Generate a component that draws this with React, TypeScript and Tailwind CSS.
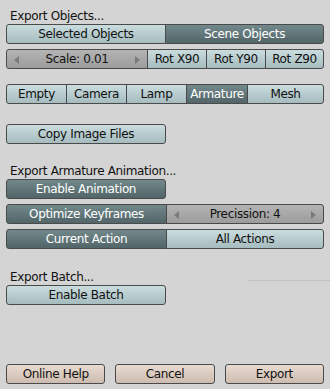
import React from "react";

type Kind = "light" | "dark" | "num" | "tan";

const kindClass: Record<Kind, string> = {
  light: "bg-gradient-to-b from-[#cadcde] to-[#a6bcbf] text-[#111]",
  dark: "bg-gradient-to-b from-[#72898c] to-[#526568] text-white",
  num: "bg-gradient-to-b from-[#b4b4b4] to-[#9c9c9c] text-[#111]",
  tan: "bg-gradient-to-b from-[#e8dbd1] to-[#cdbbaf] text-[#111]",
};

function Btn({
  label,
  kind = "light",
  className = "",
}: {
  label: string;
  kind?: Kind;
  className?: string;
}) {
  return (
    <div
      className={`flex h-[20px] items-center justify-center border border-[#4a4a4a] ${kindClass[kind]} ${className}`}
    >
      {label}
    </div>
  );
}

function NumField({ label, className = "" }: { label: string; className?: string }) {
  return (
    <div
      className={`relative flex h-[20px] items-center justify-center border border-[#4a4a4a] ${kindClass.num} ${className}`}
    >
      <svg className="absolute left-[7px] top-[6px]" width="5" height="8" viewBox="0 0 5 8">
        <polygon points="5,0 5,8 0,4" fill="#7a7a7a" />
      </svg>
      {label}
      <svg className="absolute right-[7px] top-[6px]" width="5" height="8" viewBox="0 0 5 8">
        <polygon points="0,0 0,8 5,4" fill="#7a7a7a" />
      </svg>
    </div>
  );
}

function Label({ text }: { text: string }) {
  return <div className="h-[14px] pl-[4px] leading-[14px] text-[#111]">{text}</div>;
}

export default function App() {
  return (
    <div
      className="h-[389px] w-[330px] overflow-hidden bg-[#d4d4d4] px-[6px] pt-[9px] text-[12px] tracking-[-0.35px]"
      style={{ fontFamily: '"DejaVu Sans", sans-serif' }}
    >
      {/* Export objects */}
      <Label text="Export Objects..." />
      <div className="mt-[1px] flex">
        <Btn label="Selected Objects" className="w-[160px] rounded-l-[3px]" />
        <Btn label="Scene Objects" kind="dark" className="-ml-px flex-1 rounded-r-[3px]" />
      </div>
      <div className="mt-[5px] flex">
        <NumField label="Scale: 0.01" className="w-[142px] rounded-l-[3px]" />
        <Btn label="Rot X90" className="-ml-px w-[60px]" />
        <Btn label="Rot Y90" className="-ml-px w-[60px]" />
        <Btn label="Rot Z90" className="-ml-px flex-1 rounded-r-[3px]" />
      </div>

      {/* Object types */}
      <div className="mt-[15px] flex">
        <Btn label="Empty" className="w-[61px] rounded-l-[3px]" />
        <Btn label="Camera" className="-ml-px w-[61px]" />
        <Btn label="Lamp" className="-ml-px w-[61px]" />
        <Btn label="Armature" kind="dark" className="-ml-px w-[62px]" />
        <Btn label="Mesh" className="-ml-px flex-1 rounded-r-[3px]" />
      </div>

      <Btn label="Copy Image Files" className="mt-[20px] w-[160px] rounded-[3px]" />

      {/* Armature animation */}
      <div className="mt-[20px]">
        <Label text="Export Armature Animation..." />
      </div>
      <Btn label="Enable Animation" kind="dark" className="mt-[1px] w-[160px] rounded-[3px]" />
      <div className="mt-[5px] flex">
        <Btn label="Optimize Keyframes" kind="dark" className="w-[161px] rounded-l-[3px]" />
        <NumField label="Precission: 4" className="-ml-px flex-1 rounded-r-[3px]" />
      </div>
      <div className="mt-[5px] flex">
        <Btn label="Current Action" kind="dark" className="w-[161px] rounded-l-[3px]" />
        <Btn label="All Actions" className="-ml-px flex-1 rounded-r-[3px]" />
      </div>

      {/* Batch */}
      <div className="-mr-[6px] mt-[21px] flex">
        <Label text="Export Batch..." />
        <div className="ml-auto mt-[10px] h-[2px] w-[82px] border-t border-[#c2c2c2] border-b-[#dadada]" />
      </div>
      <Btn label="Enable Batch" className="mt-[1px] w-[160px] rounded-[3px]" />

      {/* Footer */}
      <div className="mt-[59px] flex gap-[10px]">
        <Btn label="Online Help" kind="tan" className="w-[100px] rounded-[3px]" />
        <Btn label="Cancel" kind="tan" className="w-[100px] rounded-[3px]" />
        <Btn label="Export" kind="tan" className="w-[100px] rounded-[3px]" />
      </div>
    </div>
  );
}
